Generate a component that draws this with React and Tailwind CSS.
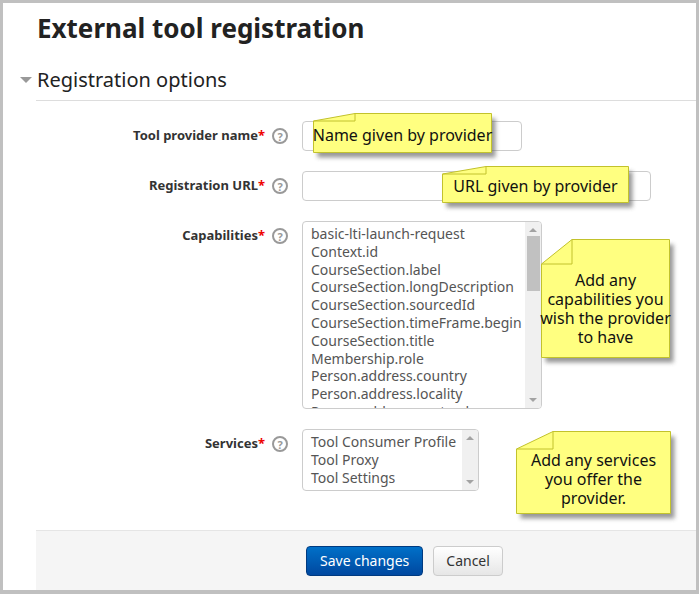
import React from "react";

const caps = ["basic-lti-launch-request","Context.id","CourseSection.label","CourseSection.longDescription","CourseSection.sourcedId","CourseSection.timeFrame.begin","CourseSection.title","Membership.role","Person.address.country","Person.address.locality","Person.address.postcode"];
const services = ["Tool Consumer Profile","Tool Proxy","Tool Settings"];

function Note({ x, y, w, h, fx, fy, children }) {
  const pts = `0.5,${fy} ${fx},0.5 ${w - 0.5},0.5 ${w - 0.5},${h - 0.5} 0.5,${h - 0.5}`;
  return (
    <div className="absolute" style={{ left: x, top: y, width: w, height: h }}>
      <svg className="absolute left-0 top-0 overflow-visible" width={w} height={h}>
        <defs>
          <filter id={`s${x}`} x="-20%" y="-20%" width="140%" height="140%">
            <feGaussianBlur stdDeviation="2" />
          </filter>
        </defs>
        <polygon points={pts} transform="translate(4,5)" fill="#555" opacity="0.6" filter={`url(#s${x})`} />
        <polygon points={pts} fill="#ffff80" stroke="#c2c22c" />
        <polyline points={`0.5,${fy} ${fx},${fy} ${fx},0.5`} fill="none" stroke="#c2c22c" />
      </svg>
      <div className="absolute inset-0 flex items-center justify-center text-center whitespace-nowrap text-[16px] leading-[19px] text-[#111]" style={{ paddingTop: fy > 12 ? fy - 4 : 4 }}>
        <div>{children}</div>
      </div>
    </div>
  );
}

function Help() {
  return (
    <span className="w-[16px] h-[16px] rounded-full border-2 border-[#999] text-[#999] text-[11px] font-bold flex items-center justify-center leading-none">?</span>
  );
}

function Label({ text }) {
  return (
    <div className="w-[299px] flex justify-end items-center pr-[14px] gap-[7px] h-[30px] shrink-0">
      <span className="font-bold text-[13px] text-[#333]">{text}<span className="text-[#e00]">*</span></span>
      <Help />
    </div>
  );
}

function Scroll({ h, thumb }) {
  return (
    <div className="w-[16px] bg-[#f0f0f0] flex flex-col items-center shrink-0" style={{ height: h }}>
      <div className="w-0 h-0 border-l-[4px] border-r-[4px] border-b-[4px] border-l-transparent border-r-transparent border-b-[#a3a3a3] mt-[6px]" />
      {thumb && <div className="w-[13px] h-[55px] bg-[#c1c1c1] mt-[4px]" />}
      <div className="flex-1" />
      <div className="w-0 h-0 border-l-[4px] border-r-[4px] border-t-[4px] border-l-transparent border-r-transparent border-t-[#a3a3a3] mb-[6px]" />
    </div>
  );
}

export default function App() {
  return (
    <div className="w-[699px] h-[594px] bg-[#c0c0c0] pt-[3px] px-[3px] pb-[4px] font-['Liberation_Sans']">
      <div className="relative w-full h-full bg-white flex flex-col overflow-hidden">
        <h1 className="text-[26px] font-bold text-[#222] pl-[34px] pt-[10px] leading-[30px]">External tool registration</h1>
        <div className="flex items-center pl-[17px] mt-[25px] h-[24px]">
          <div className="w-0 h-0 border-l-[6px] border-r-[6px] border-t-[6px] border-l-transparent border-r-transparent border-t-[#999] mr-[5px]" />
          <span className="text-[20px] text-[#222]">Registration options</span>
        </div>
        <div className="ml-[33px] mt-[8px] border-t border-[#ddd]" />
        <div className="flex flex-col mt-[20px]">
          <div className="flex">
            <Label text="Tool provider name" />
            <div className="w-[220px] h-[30px] border border-[#ccc] rounded-[4px]" />
          </div>
          <div className="flex mt-[20px]">
            <Label text="Registration URL" />
            <div className="w-[349px] h-[30px] border border-[#ccc] rounded-[4px]" />
          </div>
          <div className="flex mt-[20px]">
            <Label text="Capabilities" />
            <div className="w-[240px] h-[188px] border border-[#ccc] rounded-[4px] flex overflow-hidden">
              <div className="flex-1 overflow-hidden pl-[8px] pt-[3px] text-[14px] leading-[17.8px] text-[#555]">
                {caps.map((c) => <div key={c} className="whitespace-nowrap">{c}</div>)}
              </div>
              <Scroll h={186} thumb />
            </div>
          </div>
          <div className="flex mt-[20px]">
            <Label text="Services" />
            <div className="w-[177px] h-[62px] border border-[#ccc] rounded-[4px] flex overflow-hidden">
              <div className="flex-1 pl-[8px] pt-[3px] text-[14px] leading-[17.8px] text-[#555]">
                {services.map((c) => <div key={c} className="whitespace-nowrap">{c}</div>)}
              </div>
              <Scroll h={60} />
            </div>
          </div>
        </div>
        <div className="mt-auto ml-[33px] h-[60px] bg-[#f5f5f5] border-t border-[#e5e5e5] flex items-center gap-[10px] pl-[270px]">
          <button className="h-[30px] px-[13px] rounded-[4px] text-white text-[14px] bg-gradient-to-b from-[#0070c8] to-[#0048a0] border border-[#003a80]">Save changes</button>
          <button className="h-[30px] px-[12px] rounded-[4px] text-[#333] text-[14px] bg-gradient-to-b from-white to-[#e6e6e6] border border-[#ccc]">Cancel</button>
        </div>
        <Note x={310} y={110} w={179} h={40} fx={42} fy={8}>Name given by provider</Note>
        <Note x={439} y={163} w={187} h={37} fx={44} fy={8}>URL given by provider</Note>
        <Note x={538} y={236} w={129} h={119} fx={31} fy={25}>Add any<br />capabilities you<br />wish the provider<br />to have</Note>
        <Note x={513} y={428} w={155} h={83} fx={37} fy={18}>Add any services<br />you offer the<br />provider.</Note>
      </div>
    </div>
  );
}
